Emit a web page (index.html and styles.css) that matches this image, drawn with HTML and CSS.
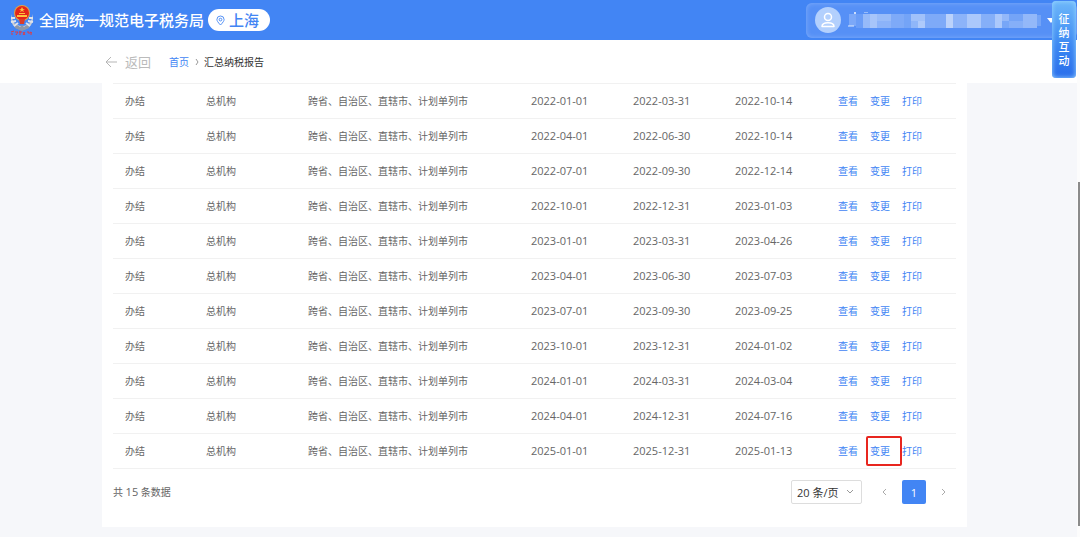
FILE: index.html
```html
<!DOCTYPE html>
<html lang="zh-CN">
<head>
<meta charset="utf-8">
<title>汇总纳税报告</title>
<link rel="stylesheet" href="styles.css">
</head>
<body>
<div class="page">
  <header class="topbar">
    <svg class="emblem" viewBox="0 0 26 32" aria-hidden="true">
      <path d="M3 10C0 17 4 25 13 26C22 25 26 17 23 10C24 16 20 22 13 22C6 22 2 16 3 10Z" fill="#c9ced8"/>
      <path d="M5 19L11 23L13 21L15 23L21 19L20 24L13 27L6 24Z" fill="#8d97aa"/>
      <path d="M2 14h4M2 18l5-1M5 22l4-3M24 14h-4M24 18l-5-1M21 22l-4-3" stroke="#dfe3ea" stroke-width="2" fill="none"/>
      <circle cx="13" cy="9" r="8" fill="#e3a044"/>
      <circle cx="13" cy="9" r="7" fill="#e42519"/>
      <path d="M13 3l1 2h2l-2 1 1 2-2-1-2 1 1-2-2-1h2zM8 11h10v2H8zM10 9h6v1h-6z" fill="#ffc23d"/>
      <path d="M10 15h6l-1 5h-4z" fill="#d93c2c"/>
      <path d="M2 28l3-1M3 29v2M6 28h3l-2 3M10 28h3M11 27v4M14 28l2 3M16 28l-2 3M18 28h2v2M21 28l2 1M22 28v3" stroke="#df3b45" fill="none"/>
    </svg>
    <span class="site-name">全国统一规范电子税务局</span>
    <button class="region" type="button">
      <svg class="pin" viewBox="0 0 10 12" aria-hidden="true"><path d="M5 11C2 8 1 6 1 5a4 4 0 0 1 8 0C9 6 8 8 5 11Z" fill="none" stroke="#4285f4"/><circle cx="5" cy="5" r="1.5" fill="none" stroke="#4285f4"/></svg>
      上海
    </button>
    <button class="account" type="button" aria-label="账户">
      <svg class="avatar" viewBox="0 0 26 26" aria-hidden="true"><circle cx="13" cy="13" r="13" fill="#b3d0fd"/><circle cx="13" cy="10" r="3.5" fill="none" stroke="#fff" stroke-width="1.5"/><path d="M7 19.500C7 14.500 19 14.500 19 19.500Z" fill="none" stroke="#fff" stroke-width="1.500" stroke-linejoin="round"/></svg>
      <svg class="masked" viewBox="0 0 196 16" preserveAspectRatio="none" aria-hidden="true">
        <g fill="#fff">
          <rect x="6" y="0" width="2" height="2" opacity=".7"/><rect x="16" y="0" width="4" height="1" opacity=".4"/>
          <rect x="1" y="2" width="7" height="12" opacity=".22"/><rect x="0" y="13" width="6" height="2" opacity=".4"/>
          <rect x="8" y="2" width="7" height="14" opacity=".12"/>
          <rect x="15" y="2" width="7" height="14" opacity=".38"/><rect x="22" y="2" width="7" height="14" opacity=".48"/>
          <rect x="29" y="2" width="14" height="7" opacity=".4"/><rect x="29" y="9" width="14" height="7" opacity=".32"/>
          <rect x="43" y="2" width="13" height="14" opacity=".24"/><rect x="56" y="2" width="7" height="14" opacity=".18"/>
          <rect x="63" y="2" width="14" height="7" opacity=".44"/><rect x="63" y="9" width="7" height="7" opacity=".34"/><rect x="70" y="9" width="7" height="7" opacity=".52"/>
          <rect x="77" y="2" width="21" height="14" opacity=".24"/><rect x="98" y="2" width="7" height="14" opacity=".6"/>
          <rect x="105" y="2" width="14" height="14" opacity=".32"/><rect x="119" y="2" width="14" height="14" opacity=".5"/>
          <rect x="133" y="2" width="14" height="14" opacity=".28"/><rect x="147" y="2" width="7" height="14" opacity=".5"/>
          <rect x="154" y="2" width="7" height="7" opacity=".36"/><rect x="154" y="9" width="7" height="7" opacity=".2"/>
          <rect x="161" y="2" width="14" height="7" opacity=".18"/><rect x="161" y="9" width="14" height="7" opacity=".28"/>
          <rect x="175" y="2" width="14" height="14" opacity=".36"/><rect x="189" y="3" width="4" height="11" opacity=".18"/>
        </g>
      </svg>
      <svg class="caret" viewBox="0 0 8 5" aria-hidden="true"><path d="M0 0h8L4 5z" fill="#fff"/></svg>
    </button>
    <button class="interact" type="button">征纳互动</button>
  </header>

  <nav class="crumbs">
    <a class="back" href="#"><svg class="arrow" viewBox="0 0 12 12" aria-hidden="true"><path d="M12 6H1M6 1L1 6l5 5" fill="none" stroke="#b5b5b5"/></svg>返回</a>
    <a class="home" href="#">首页</a>
    <svg class="sep" viewBox="0 0 4 6" aria-hidden="true"><path d="M1 0l2 3-2 3" fill="none" stroke="#999"/></svg>
    <span class="current">汇总纳税报告</span>
  </nav>

  <main class="content">
    <section class="card">
      <table class="reports">
        <colgroup><col class="c-state"><col class="c-org"><col class="c-scope"><col class="c-date"><col class="c-date"><col class="c-date-last"><col class="c-ops"></colgroup>
        <tbody id="rows"></tbody>
      </table>
      <footer class="pager">
        <span class="total">共 <span class="num">15</span> 条数据</span>
        <span class="size">
          <select class="size-select" aria-label="每页条数"><option>20 条/页</option></select>
          <svg class="chev" viewBox="0 0 8 6" aria-hidden="true"><path d="M1 1l3 3 3-3" fill="none" stroke="#999"/></svg>
        </span>
        <button class="step" type="button" aria-label="上一页"><svg class="tri" viewBox="0 0 6 8" aria-hidden="true"><path d="M4 1L1 4l3 3" fill="none" stroke="#aaa"/></svg></button>
        <button class="step on" type="button">1</button>
        <button class="step" type="button" aria-label="下一页"><svg class="tri" viewBox="0 0 6 8" aria-hidden="true"><path d="M2 1l3 3-3 3" fill="none" stroke="#aaa"/></svg></button>
      </footer>
    </section>
  </main>
  <div class="track" aria-hidden="true"><div class="thumb"></div></div>
</div>
<script src="rows.js"></script>
</body>
</html>
```
FILE: styles.css
```css
* { box-sizing: border-box; }
body {
  margin: 0;
  background: #f6f7fa;
  color: #666;
  font-family: "Open Sans", "Noto Sans CJK SC", sans-serif;
  font-size: 10px;
  line-height: 16px;
}
button, select { font-family: inherit; margin: 0; padding: 0; border: 0; background: none; }
a { color: #4285f4; text-decoration: none; }
svg { display: block; flex: none; }

.page { position: relative; min-height: 100vh; padding-right: 3px; }
.topbar {
  position: relative;
  display: flex;
  align-items: center;
  height: 40px;
  padding-left: 9px;
  background: #4285f4;
  color: #fff;
}
.emblem { width: 26px; height: 32px; }
.site-name { margin: 0 4px; font-size: 15px; line-height: 20px; font-weight: 500; }
.region {
  display: flex;
  align-items: center;
  gap: 4px;
  height: 22px;
  padding: 0 11px 0 8px;
  border-radius: 11px;
  background: #fff;
  color: #4285f4;
  font-size: 15px;
  line-height: 20px;
  font-weight: 500;
}
.pin { width: 9px; height: 11px; }
.account {
  display: flex;
  align-items: center;
  height: 35px;
  margin-left: auto;
  padding-left: 9px;
  width: 271px;
  border-radius: 6px;
  background: #5690f6;
  box-shadow: inset 0 0 5px #7fadfa;
}
.avatar { width: 26px; height: 26px; }
.masked { width: 196px; height: 16px; margin: 0 3px 0 7px; }
.caret { width: 8px; height: 5px; }
.interact {
  position: absolute;
  top: 1px;
  right: 1px;
  width: 24px;
  height: 77px;
  padding: 0 6px;
  border-radius: 4px;
  background: linear-gradient(180deg, #6db7fa, #3a86f2 60%, #2a6deb);
  box-shadow: inset 0 0 5px #9bd8ff;
  color: #fff;
  font-size: 11px;
  line-height: 14px;
  font-weight: 500;
}

.crumbs {
  display: flex;
  align-items: center;
  height: 43px;
  padding-left: 105px;
  background: #fff;
}
.back { display: flex; align-items: center; gap: 8px; margin-right: 18px; color: #bbb; font-size: 13px; line-height: 20px; }
.arrow { width: 12px; height: 12px; }
.sep { width: 4px; height: 6px; margin: 0 5px 0 6px; }
.current { color: #333; }

.content { padding: 0 110px 10px 102px; }
.card { padding: 0 11px 23px; background: #fff; }
.reports { width: 100%; border-collapse: collapse; table-layout: fixed; border-top: 1px solid #f1f1f1; }
.c-state { width: 81px; }
.c-org { width: 102px; }
.c-scope { width: 223px; }
.c-date { width: 102px; }
.c-date-last { width: 103px; }
.c-ops { width: auto; }
.reports td { height: 35px; padding: 0 0 0 12px; border-bottom: 1px solid #f1f1f1; white-space: nowrap; }
.reports .date { font-size: 11px; }
.ops { display: flex; gap: 12px; }
.op { position: relative; }
.marked::after {
  content: "";
  position: absolute;
  inset: -7px -12px -7px -4px;
  border: 2px solid #e8261f;
  border-radius: 2px;
}

.pager { display: flex; align-items: center; height: 24px; margin-top: 11px; padding-right: 1px; }
.total { margin-right: auto; }
.num { font-size: 11px; }
.size { position: relative; margin-right: 11px; }
.size-select {
  display: block;
  appearance: none;
  width: 71px;
  height: 24px;
  padding-left: 5px;
  border: 1px solid #ddd;
  border-radius: 2px;
  background: #fff;
  color: #333;
  font-size: 11px;
}
.chev { position: absolute; top: 9px; right: 8px; width: 8px; height: 6px; }
.step { display: grid; place-items: center; width: 24px; height: 24px; margin-right: 5px; border-radius: 2px; font-size: 11px; }
.step:last-child { margin-right: 0; }
.on { background: #4285f4; color: #fff; }
.tri { width: 6px; height: 8px; }

.track { position: absolute; top: 0; right: 0; bottom: 0; width: 3px; background: #fcfcfc; }
.thumb { width: 2px; height: 64%; margin: 182px 0 0 1px; background: #8b8b8b; }
```
FILE: rows.js
```js
const periods = [
  ["2022-01-01", "2022-03-31", "2022-10-14"],
  ["2022-04-01", "2022-06-30", "2022-10-14"],
  ["2022-07-01", "2022-09-30", "2022-12-14"],
  ["2022-10-01", "2022-12-31", "2023-01-03"],
  ["2023-01-01", "2023-03-31", "2023-04-26"],
  ["2023-04-01", "2023-06-30", "2023-07-03"],
  ["2023-07-01", "2023-09-30", "2023-09-25"],
  ["2023-10-01", "2023-12-31", "2024-01-02"],
  ["2024-01-01", "2024-03-31", "2024-03-04"],
  ["2024-04-01", "2024-12-31", "2024-07-16"],
  ["2025-01-01", "2025-12-31", "2025-01-13"]
];
document.getElementById("rows").innerHTML = periods.map((dates, i) => `
  <tr>
    <td>办结</td><td>总机构</td><td>跨省、自治区、直辖市、计划单列市</td>
    ${dates.map(d => `<td class="date">${d}</td>`).join("")}
    <td><div class="ops">
      <a class="op" href="#">查看</a>
      <a class="op${i === periods.length - 1 ? " marked" : ""}" href="#">变更</a>
      <a class="op" href="#">打印</a>
    </div></td>
  </tr>`).join("");
```
